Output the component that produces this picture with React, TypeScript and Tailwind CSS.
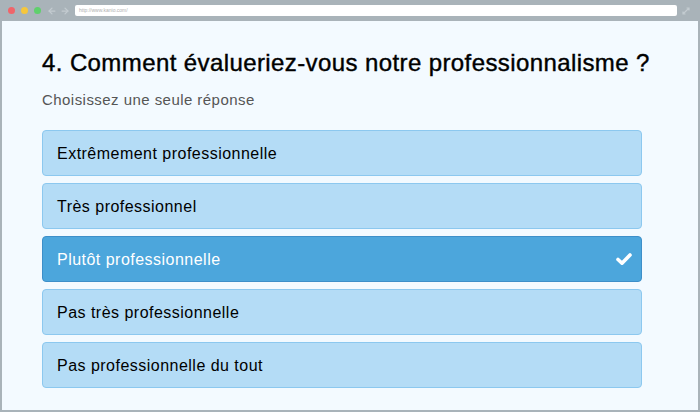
import React from 'react'
import { ArrowLeft, ArrowRight } from 'lucide-react'

const options = [
  'Extrêmement professionnelle',
  'Très professionnel',
  'Plutôt professionnelle',
  'Pas très professionnelle',
  'Pas professionnelle du tout',
]

const SELECTED = 2

const BrowserBar = () => (
  <div className="flex h-[21px] shrink-0 items-center pl-[8px] pr-[8px]">
    <div className="flex items-center gap-[6px]">
      <span className="size-[7px] rounded-full bg-[#f0656a]" />
      <span className="size-[7px] rounded-full bg-[#f6c73c]" />
      <span className="size-[7px] rounded-full bg-[#5fd06c]" />
    </div>
    <div className="ml-[6px] flex items-center gap-[3px] text-[#c3cbd0]">
      <ArrowLeft size={10} strokeWidth={3} />
      <ArrowRight size={10} strokeWidth={3} />
    </div>
    <div className="ml-[5px] flex h-[11px] w-[602px] items-center rounded-[2px] bg-white pl-[4px] text-[5px] text-[#b0b0b0]">
      http://www.kanio.com/
    </div>
    <svg width="8" height="8" viewBox="0 0 8 8" className="ml-[5px] text-[#c3cbd0]">
      <path d="M1 7 L7 1 M4.5 1 H7 V3.5 M1 4.5 V7 H3.5" stroke="currentColor" strokeWidth="1.2" fill="none" />
    </svg>
  </div>
)

export default function App() {
  return (
    <div className="flex h-[412px] w-[700px] flex-col overflow-hidden bg-[#a9b3b9] font-['Liberation_Sans',Arial,sans-serif]">
      <BrowserBar />
      <div className="ml-[2px] mr-[2px] mb-[2px] flex-1 bg-[#f3faff] pl-[40px] pt-[26px]">
        <h1 className="text-[24px] leading-[32px] font-normal tracking-[0.4px] text-black [-webkit-text-stroke:0.4px_black]">
          4. Comment évalueriez-vous notre professionnalisme ?
        </h1>
        <p className="mt-[11px] text-[15px] leading-[20px] tracking-[0.45px] text-[#555555]">Choisissez une seule réponse</p>
        <div className="mt-[20px] flex w-[600px] flex-col gap-[7px]">
          {options.map((o, i) => (
            <div
              key={o}
              className={
                i === SELECTED
                  ? 'flex h-[46px] items-center justify-between rounded-[4px] border border-[#3d8fc9] bg-[#4ca6dc] pl-[14px] pr-[9px] pt-[1px] text-[16px] tracking-[0.48px] text-white'
                  : 'flex h-[46px] items-center justify-between rounded-[4px] border border-[#8cc8ef] bg-[#b4dcf6] pl-[14px] pr-[9px] pt-[1px] text-[16px] tracking-[0.48px] text-black'
              }
            >
              <span>{o}</span>
              {i === SELECTED && (
                <svg width="16" height="13" viewBox="0 0 16 13" className="text-white">
                  <path d="M2 6.5 L6 10.2 L14 2" stroke="currentColor" strokeWidth="3.6" strokeLinecap="round" strokeLinejoin="round" fill="none" />
                </svg>
              )}
            </div>
          ))}
        </div>
      </div>
    </div>
  )
}
